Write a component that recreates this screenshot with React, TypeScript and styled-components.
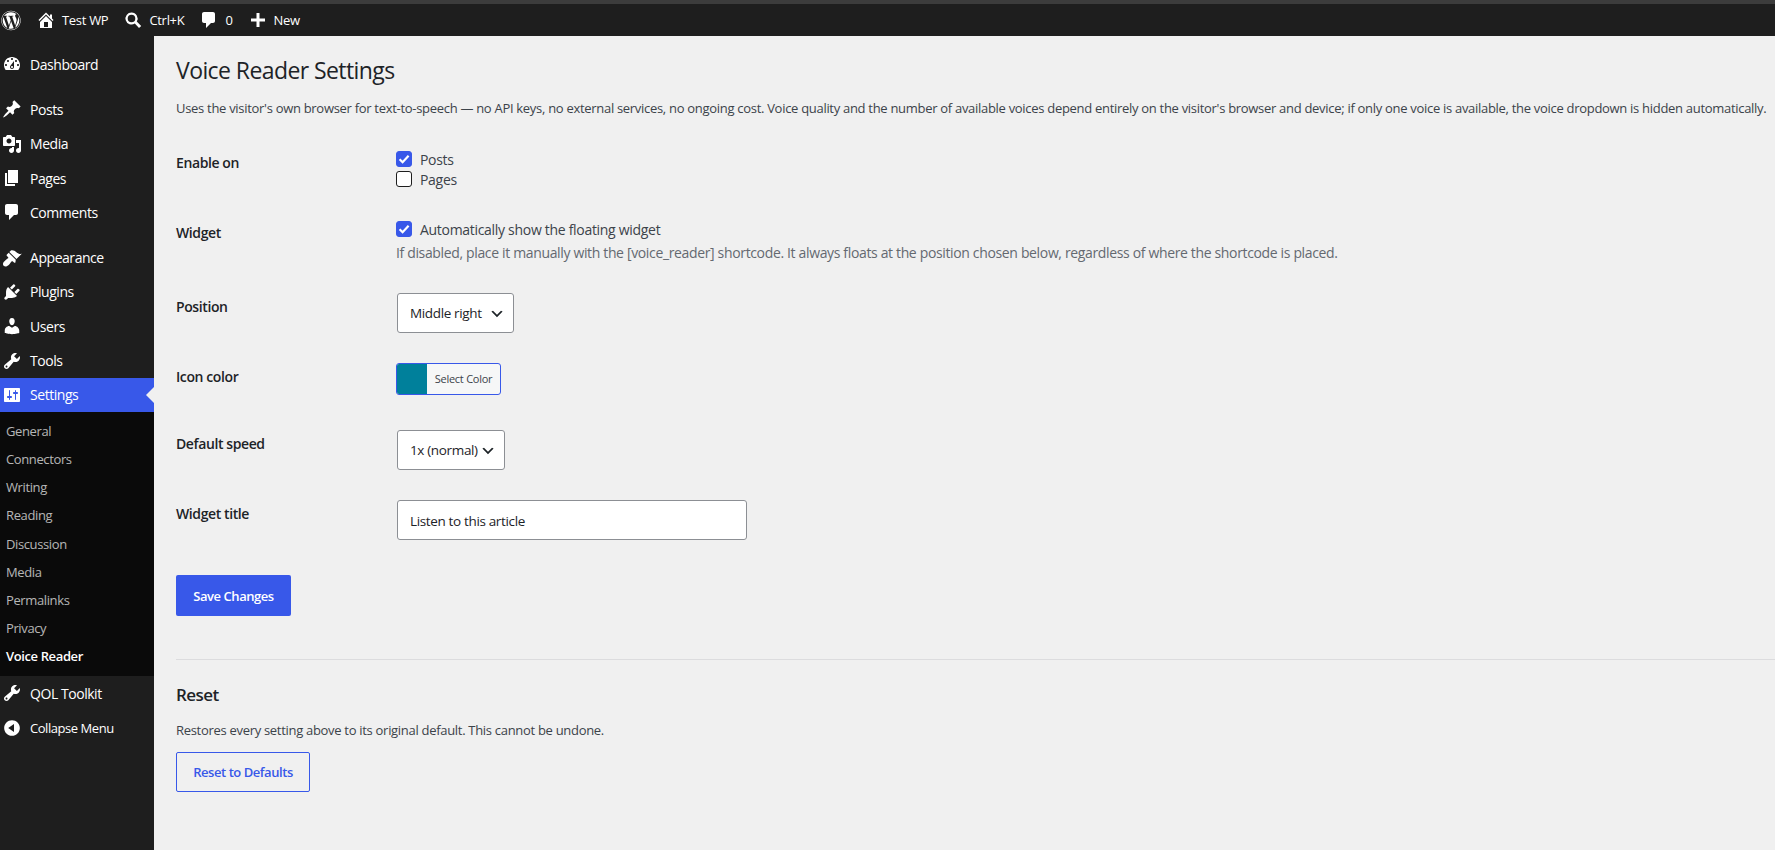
import * as React from "react";
import styled, { createGlobalStyle } from "styled-components";
import { FaWordpress } from "react-icons/fa";

const accent = "#3858e9";

const GlobalStyle = createGlobalStyle`
    html, body {
        margin: 0;
        height: 100%;
        background: #f0f0f0;
        overflow: hidden;
    }
    * { box-sizing: border-box; }
    body, input, select, button {
        font-family: "Open Sans", "Noto Sans", sans-serif;
    }
`;

const Page = styled.div`
    display: flex;
    flex-direction: column;
    height: 850px;
`;

const TopStrip = styled.div`
    height: 4px;
    background: #3c3c3c;
    flex: none;
`;

const TopBar = styled.header`
    display: flex;
    align-items: center;
    gap: 15px;
    height: 32px;
    flex: none;
    background: #1e1e1e;
    color: #fff;
    font-size: 13px;
    letter-spacing: -0.3px;
`;

const Logo = styled.div`
    display: flex;
    width: 20px;
    margin-left: 1px;
    font-size: 21px;
`;

const BarItem = styled.div`
    display: flex;
    align-items: center;
    gap: 6px;
    white-space: nowrap;

    & svg {
        width: 20px;
        height: 20px;
        fill: #fff;
        flex: none;
    }
`;

const Body = styled.div`
    display: flex;
    flex: 1;
    min-height: 0;
`;

const Sidebar = styled.nav`
    width: 154px;
    flex: none;
    padding-top: 11px;
    background: #1e1e1e;
`;

const MenuItem = styled.div<{ $active?: boolean; $gap?: boolean; $small?: boolean }>`
    position: relative;
    display: flex;
    align-items: center;
    gap: 8px;
    height: 34.3px;
    margin-top: ${props => (props.$gap ? "11px" : "0")};
    padding-left: 2px;
    font-size: ${props => (props.$small ? "13px" : "14px")};
    letter-spacing: -0.45px;
    color: #fff;
    background: ${props => (props.$active ? accent : "transparent")};

    & svg {
        width: 20px;
        height: 20px;
        fill: #fff;
        flex: none;
    }

    ${props =>
        props.$active &&
        `&::after {
            content: "";
            position: absolute;
            right: 0;
            top: 50%;
            margin-top: -8px;
            border: 8px solid transparent;
            border-right-color: #f0f0f0;
            border-left-width: 0;
        }`}
`;

const SubMenu = styled.div`
    display: flex;
    flex-direction: column;
    padding: 5px 0 6px;
    background: #0a0a0a;
`;

const SubItem = styled.div<{ $current?: boolean }>`
    display: flex;
    align-items: center;
    height: 28.15px;
    padding-left: 6px;
    font-size: 13px;
    letter-spacing: -0.38px;
    font-weight: ${props => (props.$current ? 600 : 400)};
    color: ${props => (props.$current ? "#fff" : "rgba(240, 240, 240, 0.75)")};
`;

const Main = styled.main`
    flex: 1;
    min-width: 0;
    padding-left: 22px;
    color: #1d2327;
`;

const Title = styled.h1`
    margin: 0;
    height: 60px;
    padding-top: 17px;
    font-size: 23px;
    line-height: 35px;
    font-weight: 400;
    letter-spacing: -0.58px;
`;

const Intro = styled.p`
    margin: 0;
    height: 38px;
    padding-top: 2px;
    font-size: 13px;
    line-height: 20px;
    color: #3c434a;
    white-space: nowrap;
    letter-spacing: -0.297px;
`;

const FormRow = styled.div`
    display: grid;
    grid-template-columns: 220px 1fr;
    align-items: start;
`;

const RowLabel = styled.div`
    padding: 20px 0;
    font-size: 14px;
    line-height: 18px;
    font-weight: 600;
    letter-spacing: -0.4px;
`;

const RowField = styled.div<{ $pb?: number }>`
    display: flex;
    flex-direction: column;
    align-items: flex-start;
    padding: 15px 0 ${props => props.$pb ?? 15}px;
`;

const CheckLine = styled.label`
    display: flex;
    align-items: center;
    gap: 8px;
    height: 20px;
    font-size: 14px;
    letter-spacing: -0.3px;
    color: #3c434a;
`;

const CheckBox = styled.span<{ $on?: boolean }>`
    display: flex;
    align-items: center;
    justify-content: center;
    width: 16px;
    height: 16px;
    border-radius: 3px;
    border: 1px solid ${props => (props.$on ? accent : "#1e1e1e")};
    background: ${props => (props.$on ? accent : "#fff")};

    & svg {
        width: 14px;
        height: 14px;
    }
`;

const Description = styled.p`
    margin: 4px 0 0;
    font-size: 14px;
    line-height: 20px;
    letter-spacing: -0.35px;
    color: #646970;
    white-space: nowrap;
`;

const Select = styled.select<{ $w: number }>`
    appearance: none;
    width: ${props => props.$w}px;
    height: 40px;
    margin-left: 1px;
    padding: 0 24px 0 12px;
    border: 1px solid #8c8f94;
    border-radius: 3px;
    font-size: 13.5px;
    letter-spacing: -0.35px;
    color: #1d2327;
    background: #fff url("data:image/svg+xml;charset=US-ASCII,%3Csvg%20width%3D%2220%22%20height%3D%2220%22%20xmlns%3D%22http%3A%2F%2Fwww.w3.org%2F2000%2Fsvg%22%3E%3Cpath%20d%3D%22M5%206l5%205%205-5%202%201-7%207-7-7%202-1z%22%20fill%3D%22%231d2327%22%2F%3E%3C%2Fsvg%3E") no-repeat right 8px top 55%;
    background-size: 16px 16px;
`;

const ColorButton = styled.button`
    display: flex;
    align-items: stretch;
    width: 105px;
    height: 32px;
    padding: 0;
    border: 1px solid ${accent};
    border-radius: 3px;
    background: #f6f7f7;
    overflow: hidden;
`;

const Swatch = styled.span<{ $color: string }>`
    width: 30px;
    flex: none;
    background: ${props => props.$color};
`;

const ColorLabel = styled.span`
    flex: 1;
    font-size: 11px;
    line-height: 30px;
    letter-spacing: -0.25px;
    color: #3c434a;
`;

const TitleInput = styled.input`
    width: 350px;
    height: 40px;
    margin-left: 1px;
    padding: 2px 12px 0;
    border: 1px solid #8c8f94;
    border-radius: 3px;
    background: #fff;
    font-size: 13.5px;
    letter-spacing: -0.35px;
    color: #1d2327;
`;

const PrimaryButton = styled.button`
    display: block;
    width: 115px;
    height: 41px;
    margin-top: 20px;
    padding: 0;
    border: 0;
    border-radius: 2px;
    background: ${accent};
    color: #fff;
    font-size: 13px;
    font-weight: 600;
    letter-spacing: -0.45px;
`;

const Divider = styled.hr`
    height: 1px;
    margin: 43px 0 0;
    border: 0;
    background: #dcdcde;
`;

const SectionTitle = styled.h2`
    margin: 0;
    padding-top: 24px;
    font-size: 17px;
    line-height: 22px;
    font-weight: 600;
    letter-spacing: -0.55px;
`;

const SectionText = styled.p`
    margin: 14px 0 0;
    font-size: 13px;
    line-height: 20px;
    letter-spacing: -0.3px;
    color: #3c434a;
`;

const OutlineButton = styled.button`
    display: block;
    width: 134px;
    height: 40px;
    margin-top: 12px;
    padding: 0;
    border: 1px solid ${accent};
    border-radius: 2px;
    background: transparent;
    color: ${accent};
    font-size: 13px;
    font-weight: 600;
    letter-spacing: -0.45px;
`;

const icons = {
    home: "M16 8.5l1.53 1.53-1.06 1.06L10 4.62l-6.47 6.47-1.06-1.06L10 2.5l4 4v-2h2v4zm-6-2.46l6 5.99V18H4v-5.97zM12 17v-5H8v5h4z",
    search: "M8.5 2.5a6 6 0 1 0 3.3 11l4.2 4.6 2.2-2.2-4.4-4.4a6 6 0 0 0-5.3-9zm0 2.2a3.8 3.8 0 1 1 0 7.6 3.8 3.8 0 0 1 0-7.6z",
    comment: "M5 2h9c1.1 0 2 .9 2 2v7c0 1.1-.9 2-2 2h-2l-5 5v-5H5c-1.1 0-2-.9-2-2V4c0-1.1.9-2 2-2z",
    plus: "M17 8.5v3h-5.5V17h-3v-5.5H3v-3h5.5V3h3v5.5H17z",
    dashboard: "M3.76 16h12.48c1.1-1.37 1.76-3.11 1.76-5 0-4.42-3.58-8-8-8s-8 3.58-8 8c0 1.89.66 3.63 1.76 5zM10 4c.55 0 1 .45 1 1s-.45 1-1 1-1-.45-1-1 .45-1 1-1zM6 6c.55 0 1 .45 1 1s-.45 1-1 1-1-.45-1-1 .45-1 1-1zm8 0c.55 0 1 .45 1 1s-.45 1-1 1-1-.45-1-1 .45-1 1-1zm-5.37 5.55L12 7v6c0 1.1-.9 2-2 2s-2-.9-2-2c0-.57.24-1.08.63-1.45zM4 10c.55 0 1 .45 1 1s-.45 1-1 1-1-.45-1-1 .45-1 1-1zm12 0c.55 0 1 .45 1 1s-.45 1-1 1-1-.45-1-1 .45-1 1-1zm-5 3c0-.55-.45-1-1-1s-1 .45-1 1 .45 1 1 1 1-.45 1-1z",
    pin: "M10.44 3.02l1.82-1.82 6.36 6.35-1.83 1.82c-1.05-.68-2.48-.57-3.41.36l-.75.75c-.92.93-1.04 2.35-.35 3.41l-1.83 1.82-2.41-2.41-2.8 2.79c-.42.42-3.38 2.71-3.8 2.29s1.86-3.39 2.28-3.81l2.79-2.79L4.1 9.36l1.83-1.82c1.05.69 2.48.57 3.4-.36l.75-.75c.93-.92 1.05-2.35.36-3.41z",
    media: "M13 11V4c0-.55-.45-1-1-1h-1.67L9 1H5L3.67 3H2c-.55 0-1 .45-1 1v7c0 .55.45 1 1 1h10c.55 0 1-.45 1-1zM7 4.5c1.38 0 2.5 1.12 2.5 2.5S8.38 9.5 7 9.5 4.5 8.38 4.5 7 5.62 4.5 7 4.5zM14 6h5v10.5c0 1.38-1.12 2.5-2.5 2.5S14 17.88 14 16.5s1.12-2.5 2.5-2.5c.17 0 .34.02.5.05V9h-3V6zm-4 8.05V13h2v3.5c0 1.38-1.12 2.5-2.5 2.5S7 17.88 7 16.5 8.12 14 9.5 14c.17 0 .34.02.5.05z",
    pages: "M6 15V2h10v13H6zm-1 1h8v2H3V5h2v11z",
    appearance: "M14.48 11.06L7.41 3.99l1.5-1.5c.5-.56 2.3-.47 3.51.32 1.21.8 1.43 1.28 2.91 2.1 1.18.64 2.45 1.26 4.45.85zm-.71.71L6.7 4.7 4.93 6.47c-.39.39-.39 1.02 0 1.41l1.06 1.06c.39.39.39 1.03 0 1.42-.6.6-1.43 1.11-2.21 1.69-.35.26-.7.53-1.01.84C1.43 13.71 1 14.87 1 15.9c0 .57.03 1.11.43 1.53l.55.55c.39.39.96.42 1.53.42 1.02 0 2.18-.43 3.47-1.72.31-.31.58-.66.84-1.01.58-.78 1.09-1.61 1.69-2.21.39-.39 1.03-.39 1.42 0l1.06 1.06c.39.39 1.02.39 1.41 0z",
    plugins: "M13.11 4.36L9.87 7.6 8 5.73l3.24-3.24c.35-.34 1.05-.2 1.56.32.52.51.66 1.21.31 1.55zm-8 1.77l.91-1.12 9.01 9.01-1.19.84c-.71.71-2.63 1.16-3.82 1.16H6.14L4.9 17.26c-.59.59-1.54.59-2.12 0-.59-.58-.59-1.53 0-2.12l1.24-1.24v-3.88c0-1.13.4-3.19 1.09-3.89zm7.26 3.97l3.24-3.24c.34-.35 1.04-.21 1.55.31.52.51.66 1.21.31 1.55l-3.24 3.25z",
    users: "M10 9.25c-2.27 0-2.73-3.44-2.73-3.44C7 4.02 7.82 2 9.97 2c2.16 0 2.98 2.02 2.71 3.81 0 0-.41 3.44-2.68 3.44zm0 2.57L12.72 10c2.39 0 4.52 2.33 4.52 4.53v2.49s-3.65 1.13-7.24 1.13c-3.65 0-7.24-1.13-7.24-1.13v-2.49c0-2.25 1.94-4.48 4.47-4.48z",
    tools: "M16.68 9.77c-1.34 1.34-3.3 1.67-4.95.99l-5.41 6.52c-.99.99-2.59.99-3.58 0s-.99-2.59 0-3.57l6.52-5.42c-.68-1.65-.35-3.61.99-4.95 1.28-1.28 3.12-1.62 4.72-1.06l-2.89 2.89 2.82 2.82 2.86-2.87c.53 1.58.18 3.39-1.08 4.65zM3.81 16.21c.4.39 1.04.39 1.43 0 .4-.4.4-1.04 0-1.43-.39-.4-1.03-.4-1.43 0-.39.39-.39 1.03 0 1.43z",
    settings: "M18 16V4c0-.55-.45-1-1-1H3c-.55 0-1 .45-1 1v12c0 .55.45 1 1 1h14c.55 0 1-.45 1-1zM8 11h1c.55 0 1 .45 1 1s-.45 1-1 1H8v1.5c0 .28-.22.5-.5.5s-.5-.22-.5-.5V13H6c-.55 0-1-.45-1-1s.45-1 1-1h1V5.5c0-.28.22-.5.5-.5s.5.22.5.5V11zm5-2h-1c-.55 0-1-.45-1-1s.45-1 1-1h1V5.5c0-.28.22-.5.5-.5s.5.22.5.5V7h1c.55 0 1 .45 1 1s-.45 1-1 1h-1v5.5c0 .28-.22.5-.5.5s-.5-.22-.5-.5V9z",
    collapse: "M10 2.16c4.33 0 7.84 3.51 7.84 7.84s-3.51 7.84-7.84 7.84S2.16 14.33 2.16 10 5.71 2.16 10 2.16zm2 11.72V6.12L6.18 9.97z",
};

const Dashicon: React.FunctionComponent<{ name: keyof typeof icons }> = ({ name }) => (
    <svg viewBox="0 0 20 20" aria-hidden="true">
        <path d={icons[name]} />
    </svg>
);

const Check: React.FunctionComponent<{ on?: boolean }> = ({ on }) => (
    <CheckBox $on={on}>
        {on && (
            <svg viewBox="0 0 14 14" aria-hidden="true">
                <path d="M2.6 7.2l3 3L11.6 3.8" fill="none" stroke="#fff" strokeWidth="2.2" />
            </svg>
        )}
    </CheckBox>
);

const subItems = ["General", "Connectors", "Writing", "Reading", "Discussion", "Media", "Permalinks", "Privacy"];

const App: React.FunctionComponent = () => (
    <Page>
        <GlobalStyle />
        <TopStrip />
        <TopBar>
            <Logo><FaWordpress /></Logo>
            <BarItem><Dashicon name="home" />Test WP</BarItem>
            <BarItem><Dashicon name="search" />Ctrl+K</BarItem>
            <BarItem><Dashicon name="comment" />0</BarItem>
            <BarItem><Dashicon name="plus" />New</BarItem>
        </TopBar>
        <Body>
            <Sidebar>
                <MenuItem><Dashicon name="dashboard" />Dashboard</MenuItem>
                <MenuItem $gap><Dashicon name="pin" />Posts</MenuItem>
                <MenuItem><Dashicon name="media" />Media</MenuItem>
                <MenuItem><Dashicon name="pages" />Pages</MenuItem>
                <MenuItem><Dashicon name="comment" />Comments</MenuItem>
                <MenuItem $gap><Dashicon name="appearance" />Appearance</MenuItem>
                <MenuItem><Dashicon name="plugins" />Plugins</MenuItem>
                <MenuItem><Dashicon name="users" />Users</MenuItem>
                <MenuItem><Dashicon name="tools" />Tools</MenuItem>
                <MenuItem $active><Dashicon name="settings" />Settings</MenuItem>
                <SubMenu>
                    {subItems.map(item => <SubItem key={item}>{item}</SubItem>)}
                    <SubItem $current>Voice Reader</SubItem>
                </SubMenu>
                <MenuItem><Dashicon name="tools" />QOL Toolkit</MenuItem>
                <MenuItem $small><Dashicon name="collapse" />Collapse Menu</MenuItem>
            </Sidebar>
            <Main>
                <Title>Voice Reader Settings</Title>
                <Intro>Uses the visitor's own browser for text-to-speech — no API keys, no external services, no ongoing cost. Voice quality and the number of available voices depend entirely on the visitor's browser and device; if only one voice is available, the voice dropdown is hidden automatically.</Intro>
                <FormRow>
                    <RowLabel>Enable on</RowLabel>
                    <RowField>
                        <CheckLine><Check on />Posts</CheckLine>
                        <CheckLine><Check />Pages</CheckLine>
                    </RowField>
                </FormRow>
                <FormRow>
                    <RowLabel>Widget</RowLabel>
                    <RowField>
                        <CheckLine><Check on />Automatically show the floating widget</CheckLine>
                        <Description>If disabled, place it manually with the [voice_reader] shortcode. It always floats at the position chosen below, regardless of where the shortcode is placed.</Description>
                    </RowField>
                </FormRow>
                <FormRow>
                    <RowLabel>Position</RowLabel>
                    <RowField>
                        <Select $w={117} defaultValue="middle-right">
                            <option value="middle-right">Middle right</option>
                        </Select>
                    </RowField>
                </FormRow>
                <FormRow>
                    <RowLabel>Icon color</RowLabel>
                    <RowField $pb={20}>
                        <ColorButton type="button">
                            <Swatch $color="#00809b" />
                            <ColorLabel>Select Color</ColorLabel>
                        </ColorButton>
                    </RowField>
                </FormRow>
                <FormRow>
                    <RowLabel>Default speed</RowLabel>
                    <RowField>
                        <Select $w={108} defaultValue="1">
                            <option value="1">1x (normal)</option>
                        </Select>
                    </RowField>
                </FormRow>
                <FormRow>
                    <RowLabel>Widget title</RowLabel>
                    <RowField>
                        <TitleInput defaultValue="Listen to this article" />
                    </RowField>
                </FormRow>
                <PrimaryButton type="button">Save Changes</PrimaryButton>
                <Divider />
                <SectionTitle>Reset</SectionTitle>
                <SectionText>Restores every setting above to its original default. This cannot be undone.</SectionText>
                <OutlineButton type="button">Reset to Defaults</OutlineButton>
            </Main>
        </Body>
    </Page>
);

export default App;
